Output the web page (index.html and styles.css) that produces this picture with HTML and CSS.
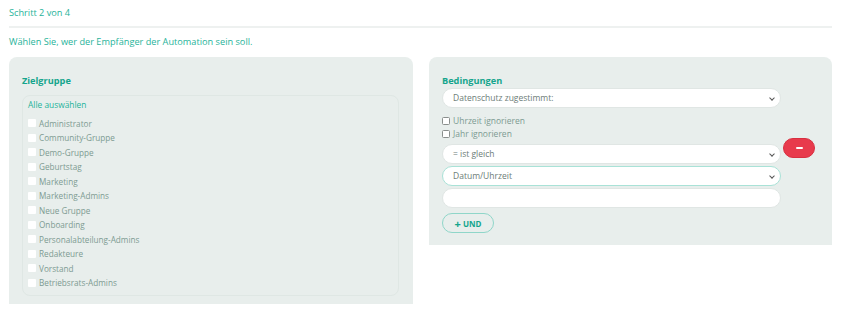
FILE: index.html
```html
<!DOCTYPE html>
<html lang="de">
<head>
<meta charset="utf-8">
<title>Automation – Schritt 2 von 4</title>
<link rel="stylesheet" href="styles.css">
</head>
<body>
<div class="page">
  <div class="step">Schritt 2 von 4</div>
  <div class="divider"></div>
  <p class="intro">Wählen Sie, wer der Empfänger der Automation sein soll.</p>
  <div class="columns">
    <section class="panel panel-left">
      <h3 class="panel-title">Zielgruppe</h3>
      <div class="group-box">
        <div class="select-all">Alle auswählen</div>
        <ul class="group-list">
          <li><span class="cb"></span>Administrator</li>
          <li><span class="cb"></span>Community-Gruppe</li>
          <li><span class="cb"></span>Demo-Gruppe</li>
          <li><span class="cb"></span>Geburtstag</li>
          <li><span class="cb"></span>Marketing</li>
          <li><span class="cb"></span>Marketing-Admins</li>
          <li><span class="cb"></span>Neue Gruppe</li>
          <li><span class="cb"></span>Onboarding</li>
          <li><span class="cb"></span>Personalabteilung-Admins</li>
          <li><span class="cb"></span>Redakteure</li>
          <li><span class="cb"></span>Vorstand</li>
          <li><span class="cb"></span>Betriebsrats-Admins</li>
        </ul>
      </div>
    </section>
    <section class="panel panel-right">
      <h3 class="panel-title">Bedingungen</h3>
      <div class="cond-grid">
        <div class="field select">Datenschutz zugestimmt:<span class="chev"></span></div>
        <div></div>
        <div class="checks">
          <label class="check"><span class="cb2"></span>Uhrzeit ignorieren</label>
          <label class="check"><span class="cb2"></span>Jahr ignorieren</label>
        </div>
        <div></div>
        <div class="field select">= ist gleich<span class="chev"></span></div>
        <button class="remove" type="button"><span class="minus"></span></button>
        <div class="field select active">Datum/Uhrzeit<span class="chev"></span></div>
        <div></div>
        <div class="field"></div>
        <div></div>
      </div>
      <button class="and-btn" type="button"><span class="plus">+</span>UND</button>
    </section>
  </div>
</div>
</body>
</html>
```
FILE: styles.css
```css
* { box-sizing: border-box; }
html, body { margin: 0; padding: 0; background: #fff; }
body {
  font-family: "Open Sans", "Liberation Sans", sans-serif;
  color: #6f9389;
}
.page { padding: 0 18px 0 9px; }
.step {
  font-size: 9.2px;
  line-height: 14px;
  padding-top: 6px;
  color: #1fb39a;
}
.divider {
  height: 2px;
  background: #eef1f0;
  margin-top: 6px;
}
.intro {
  margin: 7px 0 0;
  font-size: 9.2px;
  line-height: 14px;
  color: #1fb39a;
}
.columns {
  display: grid;
  grid-template-columns: 404px 403px;
  column-gap: 16px;
  margin-top: 8px;
  align-items: start;
}
.panel {
  background: #e8eeec;
  border-radius: 8px 8px 0 0;
}
.panel-left { padding: 18px 14px 8px 13px; }
.panel-right { padding: 18px 13px 12px 13px; }
.panel-title {
  margin: 0;
  font-size: 9.2px;
  line-height: 12px;
  font-weight: 700;
  color: #15a58d;
}
.group-box {
  margin-top: 8px;
  border: 1px solid #dfe7e4;
  border-radius: 8px;
  padding: 3px 5px 5px;
}
.select-all {
  font-size: 8.4px;
  line-height: 12px;
  color: #1fb39a;
}
.group-list {
  list-style: none;
  margin: 5px 0 0;
  padding: 0;
}
.group-list li {
  display: flex;
  align-items: center;
  height: 14.5px;
  font-size: 8.2px;
  color: #7d9b92;
}
.cb {
  width: 8px;
  height: 8px;
  background: #fff;
  border-radius: 1px;
  margin-right: 3px;
  flex: none;
}
.cond-grid {
  display: grid;
  grid-template-columns: 339px 33px;
  column-gap: 2px;
  row-gap: 2px;
  margin-top: 1px;
}
.field {
  position: relative;
  height: 20px;
  background: #fff;
  border: 1px solid #e0e6e4;
  border-radius: 10px;
  padding-left: 10px;
  font-size: 8.5px;
  line-height: 18px;
  color: #6d7d78;
}
.field.active { border-color: #a9e2d7; }
.chev {
  position: absolute;
  right: 6px;
  top: 7px;
  width: 4px;
  height: 4px;
  border-right: 1.2px solid #555;
  border-bottom: 1.2px solid #555;
  transform: rotate(45deg);
}
.checks {
  padding: 4px 0 2px;
}
.check {
  display: flex;
  align-items: center;
  height: 13px;
  font-size: 8.5px;
  color: #7d9b92;
}
.cb2 {
  width: 8px;
  height: 8px;
  border: 1px solid #8a8f8d;
  border-radius: 1.5px;
  background: #fff;
  margin-right: 3px;
}
.remove {
  align-self: start;
  margin-top: -6px;
  width: 32px;
  height: 20px;
  border: 1px solid #d82f40;
  border-radius: 10px;
  background: #e83a4c;
  padding: 0;
  display: flex;
  align-items: center;
  justify-content: center;
}
.minus {
  width: 7px;
  height: 2px;
  background: #fff;
  border-radius: 1px;
}
.and-btn {
  margin-top: 5px;
  height: 20px;
  width: 52px;
  border: 1px solid #8fd6c9;
  border-radius: 10px;
  background: transparent;
  font-family: inherit;
  font-size: 8px;
  font-weight: 700;
  color: #15a58d;
  padding: 0;
  display: flex;
  align-items: center;
  justify-content: center;
}
.plus {
  font-size: 11px;
  margin-right: 2px;
  line-height: 1;
}
```
